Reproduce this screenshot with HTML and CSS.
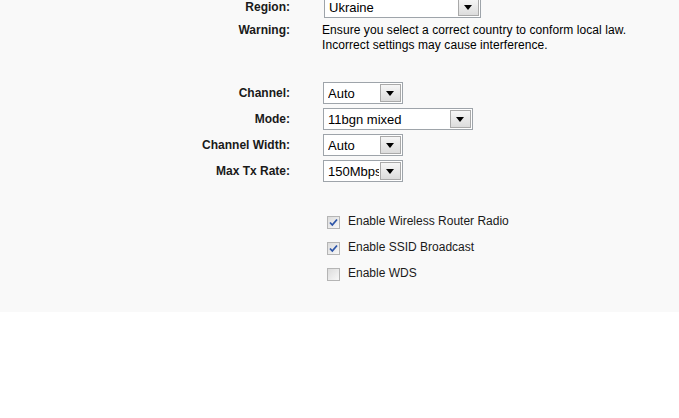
FILE: index.html
```html
<!DOCTYPE html>
<html lang="en">
<head>
  <meta charset="UTF-8">
  <title>Wireless Settings</title>
  <link rel="stylesheet" href="styles.css">
</head>
<body>

<div class="panel">
  <div class="form">
    <div class="row">
      <div class="label">Region:</div>
      <div class="field">
        <div class="select w-region"><span class="value">Ukraine</span><span class="arrow"></span></div>
      </div>
    </div>
    <div class="row row-text">
      <div class="label">Warning:</div>
      <div class="field note">Ensure you select a correct country to conform local law.<br>Incorrect settings may cause interference.</div>
    </div>

    <div class="group">
      <div class="row">
        <div class="label">Channel:</div>
        <div class="field">
          <div class="select w-small"><span class="value">Auto</span><span class="arrow"></span></div>
        </div>
      </div>
      <div class="row">
        <div class="label">Mode:</div>
        <div class="field">
          <div class="select w-mode"><span class="value">11bgn mixed</span><span class="arrow"></span></div>
        </div>
      </div>
      <div class="row">
        <div class="label">Channel Width:</div>
        <div class="field">
          <div class="select w-small"><span class="value">Auto</span><span class="arrow"></span></div>
        </div>
      </div>
      <div class="row">
        <div class="label">Max Tx Rate:</div>
        <div class="field">
          <div class="select w-small"><span class="value">150Mbps</span><span class="arrow"></span></div>
        </div>
      </div>
    </div>

    <div class="checks">
      <label class="check"><span class="box checked"><svg viewBox="0 0 13 13" width="13" height="13"><path d="M3 6.5 L5.3 9 L10 3.5" fill="none" stroke="#2d55a8" stroke-width="1.8"/></svg></span>Enable Wireless Router Radio</label>
      <label class="check"><span class="box checked"><svg viewBox="0 0 13 13" width="13" height="13"><path d="M3 6.5 L5.3 9 L10 3.5" fill="none" stroke="#2d55a8" stroke-width="1.8"/></svg></span>Enable SSID Broadcast</label>
      <label class="check"><span class="box"></span>Enable WDS</label>
    </div>
  </div>
</div>

</body>
</html>
```

FILE: styles.css
```css
/* General */
body {
  margin: 0;
  padding: 0;
  background: #fff;
  font-family: "Liberation Sans", Arial, sans-serif;
  font-size: 12px;
  color: #000;
  overflow: hidden;
}
.panel {
  background: #f9f9f9;
  height: 312px;
  overflow: hidden;
}
.form {
  margin-top: -6px;
}
/* Rows */
.row {
  display: grid;
  grid-template-columns: 290px 1fr;
  column-gap: 32px;
  height: 26px;
  align-items: center;
}
.row-text {
  height: auto;
  align-items: start;
  margin-top: 2px;
}
.label {
  text-align: right;
  font-weight: bold;
  color: #1a1a1a;
  line-height: 15px;
}
.row-text .label {
  padding-top: 1px;
}
.note {
  line-height: 15px;
  padding-top: 1px;
  letter-spacing: 0.07px;
}
.group {
  margin-top: 27px;
}
/* Select boxes */
.select {
  display: flex;
  align-items: center;
  justify-content: space-between;
  box-sizing: border-box;
  height: 22px;
  background: #fff;
  border: 1px solid #9ea4aa;
  padding: 0 1px 0 4px;
  font-size: 13px;
  overflow: hidden;
  white-space: nowrap;
}
.select .value {
  overflow: hidden;
  flex: 1;
}
.w-region {
  width: 157px;
  margin-left: 2px;
}
.w-small {
  width: 80px;
  margin-left: 1px;
}
.w-mode {
  width: 150px;
  margin-left: 1px;
}
.arrow {
  position: relative;
  flex: none;
  box-sizing: border-box;
  width: 21px;
  height: 18px;
  margin-left: 1px;
  border: 1px solid #a9a9a9;
  background: linear-gradient(to bottom, #f6f6f6, #dcdcdc);
}
.arrow::after {
  content: "";
  position: absolute;
  left: 5px;
  top: 6px;
  border-left: 4px solid transparent;
  border-right: 4px solid transparent;
  border-top: 5px solid #000;
}
/* Checkboxes */
.checks {
  margin-top: 24px;
  padding-left: 327px;
}
.check {
  display: flex;
  align-items: center;
  height: 26px;
  color: #1a1a1a;
}
.box {
  box-sizing: border-box;
  width: 13px;
  height: 13px;
  margin-right: 8px;
  margin-top: 2px;
  border: 1px solid #b5b5b5;
  background: linear-gradient(135deg, #dcdcdc, #f8f8f8);
  position: relative;
}
.box svg {
  position: absolute;
  left: -1px;
  top: -1px;
}
```
